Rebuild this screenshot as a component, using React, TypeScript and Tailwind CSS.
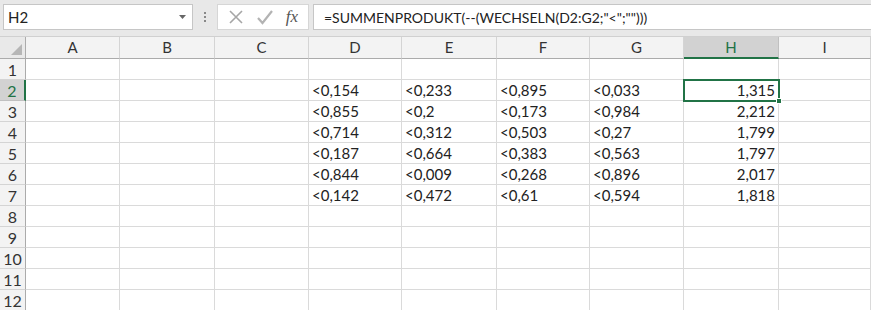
import React from "react";

const cols = ["A", "B", "C", "D", "E", "F", "G", "H", "I"];
const data: Record<number, string[]> = {
  2: ["<0,154", "<0,233", "<0,895", "<0,033", "1,315"],
  3: ["<0,855", "<0,2", "<0,173", "<0,984", "2,212"],
  4: ["<0,714", "<0,312", "<0,503", "<0,27", "1,799"],
  5: ["<0,187", "<0,664", "<0,383", "<0,563", "1,797"],
  6: ["<0,844", "<0,009", "<0,268", "<0,896", "2,017"],
  7: ["<0,142", "<0,472", "<0,61", "<0,594", "1,818"],
};

const font = { fontFamily: "Lato, 'Liberation Sans', sans-serif" };

export default function App() {
  const rows = Array.from({ length: 12 }, (_, i) => i + 1);
  return (
    <div className="w-[871px] h-[310px] overflow-hidden bg-white text-[#222]" style={font}>
      {/* formula bar */}
      <div className="h-[37px] bg-[#e8e8e8] flex items-start pt-[4px] border-b border-[#d0d0d0]">
        <div className="ml-[3px] w-[190px] h-[26px] bg-white border border-[#c6c6c6] flex items-center justify-between pl-[4px] pr-[6px]">
          <span className="text-[15px] text-[#222]">H2</span>
          <svg width="7" height="4" viewBox="0 0 7 4"><path d="M0 0h7L3.5 4z" fill="#666" /></svg>
        </div>
        <div className="w-[24px] h-[26px] flex flex-col items-center justify-center gap-[2px]">
          <span className="w-[2px] h-[2px] bg-[#888]" />
          <span className="w-[2px] h-[2px] bg-[#888]" />
          <span className="w-[2px] h-[2px] bg-[#888]" />
        </div>
        <div className="w-[92px] h-[26px] bg-white border border-[#d6d6d6] flex items-center justify-around px-[4px]">
          <svg width="16" height="16" viewBox="0 0 16 16"><path d="M2 2L14 14M14 2L2 14" stroke="#a6a6a6" strokeWidth="1.6" /></svg>
          <svg width="18" height="16" viewBox="0 0 18 16"><path d="M2 9l4.5 5L16 2" stroke="#b3b3b3" strokeWidth="2.2" fill="none" /></svg>
          <span className="text-[17px] italic text-[#555]" style={{ fontFamily: "'Liberation Serif', serif" }}>fx</span>
        </div>
        <div className="ml-[4px] flex-1 h-[26px] bg-white border border-[#c6c6c6] border-r-0 flex items-center pl-[10px]">
          <span className="text-[14px] text-[#222] whitespace-nowrap">=SUMMENPRODUKT(--(WECHSELN(D2:G2;"&lt;";"")))</span>
        </div>
      </div>

      {/* grid */}
      <div className="relative grid grid-cols-[26px_94px_95px_94px_93px_95px_93px_94px_95px_1fr]">
        {/* header row */}
        <div className="h-[22px] bg-[#e9e9e9] border-r border-b border-[#ababab] relative">
          <svg className="absolute right-[3px] bottom-[3px]" width="11" height="11" viewBox="0 0 11 11"><path d="M11 0V11H0z" fill="#b6b6b6" /></svg>
        </div>
        {cols.map((c) => (
          <div
            key={c}
            className={
              c === "H"
                ? "h-[22px] bg-[#d2d2d2] text-[#217346] border-r border-[#c0c0c0] border-b-2 border-b-[#217346] flex items-center justify-center text-[15px]"
                : "h-[22px] bg-[#f3f3f3] text-[#333] border-r border-b border-r-[#d4d4d4] border-b-[#ababab] flex items-center justify-center text-[15px]"
            }
          >
            {c}
          </div>
        ))}
        {rows.map((r) => (
          <React.Fragment key={r}>
            <div
              className={
                r === 2
                  ? "h-[21px] bg-[#d2d2d2] text-[#217346] border-b border-[#c0c0c0] border-r-2 border-r-[#217346] flex items-end justify-center text-[16px] leading-[19px]"
                  : "h-[21px] bg-[#f3f3f3] text-[#333] border-b border-r border-b-[#d4d4d4] border-r-[#ababab] flex items-end justify-center text-[16px] leading-[19px]"
              }
            >
              {r}
            </div>
            {cols.map((c, ci) => {
              const vals = data[r];
              let v = "";
              if (vals && ci >= 3 && ci <= 7) v = vals[ci - 3];
              const right = ci === 7;
              return (
                <div
                  key={c}
                  className={
                    "h-[21px] border-r border-b border-[#dadada] flex items-end text-[15px] leading-[19px] px-[3px] whitespace-nowrap " +
                    (right ? "justify-end" : "justify-start")
                  }
                >
                  {v}
                </div>
              );
            })}
          </React.Fragment>
        ))}
        {/* selection */}
        <div className="absolute left-[683px] top-[42px] w-[97px] h-[23px] border-2 border-[#217346] pointer-events-none">
          <div className="absolute right-[-4px] bottom-[-4px] w-[6px] h-[6px] bg-[#217346] border border-white" />
        </div>
      </div>
    </div>
  );
}
